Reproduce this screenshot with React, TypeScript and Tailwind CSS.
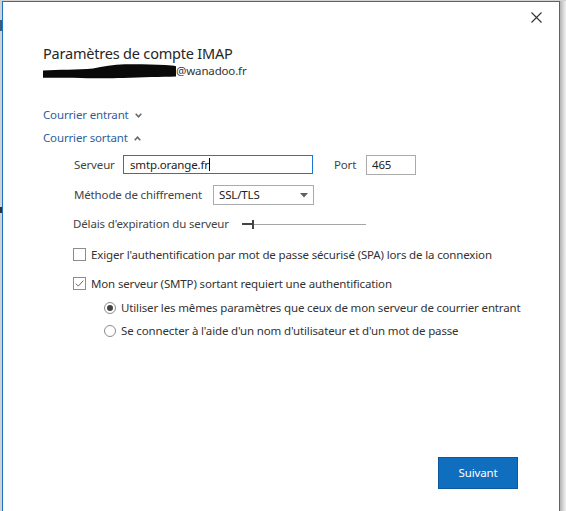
import React from 'react';

function Chevron({ up }: { up?: boolean }) {
  return (
    <svg width="7" height="5" viewBox="0 0 7 5" className="ml-[6px]">
      {up ? (
        <path d="M0.7 4.2 L3.5 1.2 L6.3 4.2" fill="none" stroke="#666" strokeWidth="1.5" />
      ) : (
        <path d="M0.7 0.8 L3.5 3.8 L6.3 0.8" fill="none" stroke="#666" strokeWidth="1.5" />
      )}
    </svg>
  );
}

function Checkbox({ checked, label }: { checked?: boolean; label: string }) {
  return (
    <div className="flex items-center h-[17px]">
      <div className="w-[13px] h-[13px] border border-[#8c8c8c] bg-white flex items-center justify-center">
        {checked && (
          <svg width="11" height="11" viewBox="0 0 11 11">
            <path d="M1.8 5.6 L4.3 8.1 L9.3 2.6" fill="none" stroke="#666" strokeWidth="1" />
          </svg>
        )}
      </div>
      <span className="ml-[5px] text-[#333]">{label}</span>
    </div>
  );
}

function Radio({ checked, label }: { checked?: boolean; label: string }) {
  return (
    <div className="flex items-center h-[17px]">
      <div className="w-[12px] h-[12px] rounded-full border border-[#8c8c8c] bg-white flex items-center justify-center">
        {checked && <div className="w-[6px] h-[6px] rounded-full bg-[#444]" />}
      </div>
      <span className="ml-[5px] text-[#333]">{label}</span>
    </div>
  );
}

export default function App() {
  return (
    <div className="w-[566px] h-[511px] overflow-hidden bg-[#d2d2d2] flex pt-px font-['Noto_Sans',sans-serif] text-[11.5px] tracking-[-0.15px]">
      {/* bit of the window behind */}
      <div className="w-[2px] shrink-0 flex flex-col">
        <div className="h-[19px]" />
        <div className="h-[11px] bg-[#3d5a78]" />
        <div className="h-[176px]" />
        <div className="h-[6px] bg-[#333]" />
      </div>

      <div className="w-[558px] h-[520px] shrink-0 bg-white border-l border-t border-r border-[#1b74c9] flex flex-col">
        <div className="flex justify-end pt-[10px] pr-[17px] h-[30px]">
          <svg width="11" height="11" viewBox="0 0 11 11">
            <path d="M0.5 0.5 L10.5 10.5 M10.5 0.5 L0.5 10.5" stroke="#333" strokeWidth="1.1" />
          </svg>
        </div>

        <div className="pl-[40px] flex flex-col">
          <h1 className="mt-[10px] text-[14.5px] leading-[22px] tracking-[-0.2px] text-[#262626]">Paramètres de compte IMAP</h1>
          <div className="-mt-px flex items-center h-[16px] text-[#333]">
            <svg width="133" height="15" viewBox="0 0 133 15">
              <path
                d="M0 6.5 C15 5.5 35 6 50 4.5 C60 2.5 70 0.5 82 0.3 C96 0 110 0.5 122 1 C127 1.3 131 1.6 133 2.2 L133 12.5 C118 13 100 13 80 14 C60 14.6 30 14 0 13.8 Z"
                fill="#0a0a0a"
              />
            </svg>
            <span>@wanadoo.fr</span>
          </div>

          <div className="mt-[27px] flex items-center h-[18px] text-[#2e5e9c]">
            <span>Courrier entrant</span>
            <Chevron />
          </div>
          <div className="mt-[5px] flex items-center h-[18px] text-[#2e5e9c]">
            <span>Courrier sortant</span>
            <Chevron up />
          </div>

          <div className="pl-[31px] flex flex-col">
            <div className="mt-[8px] flex items-center h-[19px]">
              <span className="w-[49px] text-[#444]">Serveur</span>
              <div className="w-[190px] h-[19px] border border-[#1a78d4] flex items-center pl-[6px] text-[#222]">
                <span>smtp.orange.fr</span>
                <span className="w-px h-[13px] bg-black" />
              </div>
              <span className="ml-[21px] w-[32px] text-[#444]">Port</span>
              <div className="w-[50px] h-[20px] border border-[#ababab] flex items-center pl-[5px] text-[#222]">465</div>
            </div>

            <div className="mt-[11px] flex items-center h-[20px]">
              <span className="w-[139px] text-[#444]">Méthode de chiffrement</span>
              <div className="w-[101px] h-[20px] border border-[#ababab] flex items-center justify-between pl-[5px] pr-[5px] text-[#222]">
                <span>SSL/TLS</span>
                <svg width="8" height="5" viewBox="0 0 8 5">
                  <path d="M0 0 L8 0 L4 4.5 Z" fill="#606060" />
                </svg>
              </div>
            </div>

            <div className="mt-[10px] flex items-center h-[18px]">
              <span className="-ml-px w-[169px] text-[#444]">Délais d'expiration du serveur</span>
              <div className="w-[124px] h-[10px] flex items-center">
                <div className="w-[10px] h-[2px] bg-[#444]" />
                <div className="w-[2px] h-[9px] bg-[#444]" />
                <div className="flex-1 h-px bg-[#a6a6a6]" />
              </div>
            </div>

            <div className="mt-[13px] -ml-px">
              <Checkbox label="Exiger l'authentification par mot de passe sécurisé (SPA) lors de la connexion" />
            </div>
            <div className="mt-[12px] -ml-px">
              <Checkbox checked label="Mon serveur (SMTP) sortant requiert une authentification" />
            </div>
            <div className="pl-[30px] flex flex-col">
              <div className="mt-[7px]">
                <Radio checked label="Utiliser les mêmes paramètres que ceux de mon serveur de courrier entrant" />
              </div>
              <div className="mt-[6px]">
                <Radio label="Se connecter à l'aide d'un nom d'utilisateur et d'un mot de passe" />
              </div>
            </div>
          </div>
        </div>

        <div className="mt-[118px] flex justify-end pr-[41px]">
          <button className="w-[80px] h-[32px] bg-[#106ebe] border border-[#0b5a9e] text-white">Suivant</button>
        </div>
      </div>
      <div className="w-[6px] h-full shrink-0 bg-gradient-to-r from-[#b4b4b4] to-[#f2f2f2]" />
    </div>
  );
}
